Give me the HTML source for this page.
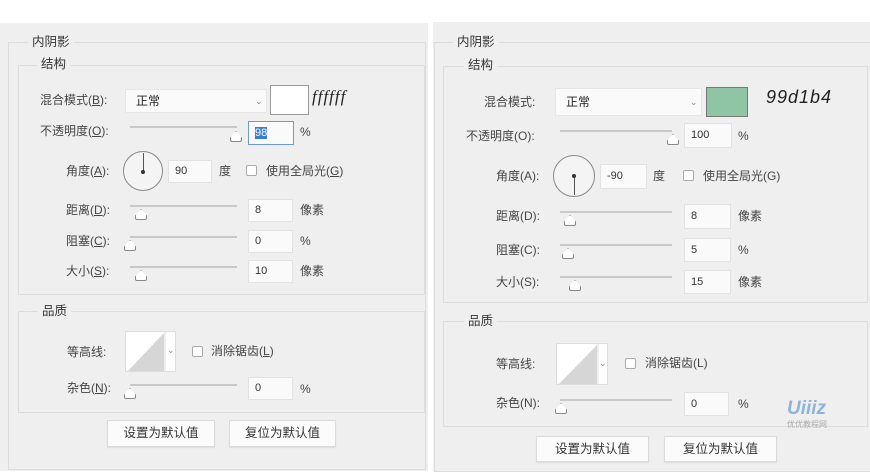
<!DOCTYPE html>
<html><head><meta charset="utf-8"><style>
*{margin:0;padding:0;box-sizing:border-box}
body{width:870px;height:471px;background:#fff;position:relative;overflow:hidden;font-family:"Liberation Sans","Noto Sans CJK SC",sans-serif;font-size:12px;color:#444}
.a{position:absolute}
.panel{position:absolute;background:#efefef}
.box{position:absolute;border:1px solid #dcdcdc}
.lbl{position:absolute;background:#efefef;padding:0 4px;color:#333;font-size:12.5px;line-height:14px}
.t{position:absolute;line-height:14px;white-space:nowrap;color:#444}
.in{position:absolute;background:#fafafa;border:1px solid #e2e2e2;font-size:11px;padding-left:6px;color:#333}
.sl{position:absolute;height:2px;background:#c8c8c8}
.th{position:absolute;width:0;height:0}
.th:before{content:"";position:absolute;left:-5px;top:0;width:10px;height:9px;background:#fff;border:1px solid #888;border-radius:5px 5px 2px 2px;clip-path:polygon(50% 0,100% 60%,100% 100%,0 100%,0 60%)}
.dd{position:absolute;background:#fafafa;border:1px solid #e6e6e6;font-size:12px;padding-left:10px;color:#222}
.chev{position:absolute;font-size:9px;color:#888}
.cb{position:absolute;width:11px;height:11px;border:1px solid #aaa;background:#fff;border-radius:2px}
.btn{position:absolute;background:#fbfbfb;border:1px solid #dadada;font-size:12.5px;text-align:center;color:#333;box-shadow:0 1px 1px #ddd}
.circ{position:absolute;border:1px solid #888;border-radius:50%;background:#f4f4f4}
.ct{position:absolute;background:#fff;border:1px solid #ddd}
</style></head><body>

<!-- LEFT -->
<div class="panel" style="left:0;top:23px;width:428px;height:448px"></div>
<div class="box" style="left:8px;top:42px;width:418px;height:428px"></div>
<div class="lbl" style="left:28px;top:35px">内阴影</div>
<div class="box" style="left:18px;top:65px;width:407px;height:230px"></div>
<div class="lbl" style="left:37px;top:57px">结构</div>
<div class="t" style="left:40px;top:93px">混合模式(<u>B</u>):</div>
<div class="dd" style="left:125px;top:89px;width:142px;height:24px;line-height:22px">正常</div>
<div class="chev" style="left:255px;top:96px">⌄</div>
<div class="a" style="left:270px;top:85px;width:39px;height:30px;background:#fff;border:1px solid #999"></div>
<div class="t" style="left:312px;top:90px;font-style:italic;font-size:17px;color:#222;font-family:'Liberation Serif',serif;letter-spacing:1px">ffffff</div>
<div class="t" style="left:40px;top:124px">不透明度(<u>O</u>):</div>
<div class="sl" style="left:130px;top:126px;width:107px"></div>
<div class="th" style="left:235px;top:131px"></div>
<div class="in" style="left:248px;top:121px;width:46px;height:24px;border:1px solid #6a9bd8;line-height:22px"><span style="background:#3a7bd5;color:#fff">98</span></div>
<div class="t" style="left:300px;top:125px">%</div>
<div class="t" style="left:66px;top:164px">角度(<u>A</u>):</div>
<div class="circ" style="left:123px;top:151px;width:40px;height:40px"></div>
<div class="a" style="left:143px;top:153px;width:1px;height:18px;background:#555"></div>
<div class="a" style="left:141px;top:170px;width:4px;height:4px;background:#333;border-radius:50%"></div>
<div class="in" style="left:168px;top:160px;width:44px;height:23px;line-height:21px">90</div>
<div class="t" style="left:219px;top:164px">度</div>
<div class="cb" style="left:246px;top:165px"></div>
<div class="t" style="left:266px;top:164px">使用全局光(<u>G</u>)</div>
<div class="t" style="left:66px;top:203px">距离(<u>D</u>):</div>
<div class="sl" style="left:130px;top:205px;width:107px"></div>
<div class="th" style="left:140px;top:209px"></div>
<div class="in" style="left:248px;top:199px;width:45px;height:23px;line-height:21px">8</div>
<div class="t" style="left:300px;top:203px">像素</div>
<div class="t" style="left:66px;top:234px">阻塞(<u>C</u>):</div>
<div class="sl" style="left:130px;top:236px;width:107px"></div>
<div class="th" style="left:129px;top:240px"></div>
<div class="in" style="left:248px;top:230px;width:45px;height:23px;line-height:21px">0</div>
<div class="t" style="left:300px;top:234px">%</div>
<div class="t" style="left:66px;top:264px">大小(<u>S</u>):</div>
<div class="sl" style="left:130px;top:266px;width:107px"></div>
<div class="th" style="left:140px;top:270px"></div>
<div class="in" style="left:248px;top:260px;width:45px;height:23px;line-height:21px">10</div>
<div class="t" style="left:300px;top:264px">像素</div>
<div class="box" style="left:18px;top:311px;width:407px;height:102px"></div>
<div class="lbl" style="left:38px;top:304px">品质</div>
<div class="t" style="left:67px;top:345px">等高线:</div>
<div class="ct" style="left:125px;top:331px;width:51px;height:41px;overflow:hidden">
<svg width="51" height="41" style="position:absolute;left:0;top:0"><polygon points="1,40 38,1 38,40" fill="#d6d6d6"/><line x1="39" y1="0" x2="39" y2="41" stroke="#ddd"/></svg>
<div class="chev" style="left:41px;top:13px">⌄</div></div>
<div class="cb" style="left:192px;top:346px"></div>
<div class="t" style="left:211px;top:344px">消除锯齿(<u>L</u>)</div>
<div class="t" style="left:67px;top:381px">杂色(<u>N</u>):</div>
<div class="sl" style="left:130px;top:384px;width:107px"></div>
<div class="th" style="left:129px;top:388px"></div>
<div class="in" style="left:248px;top:377px;width:45px;height:23px;line-height:21px">0</div>
<div class="t" style="left:300px;top:382px">%</div>
<div class="btn" style="left:107px;top:420px;width:108px;height:27px;line-height:25px">设置为默认值</div>
<div class="btn" style="left:229px;top:420px;width:107px;height:27px;line-height:25px">复位为默认值</div>

<!-- RIGHT -->
<div class="panel" style="left:433px;top:22px;width:437px;height:449px"></div>
<div class="box" style="left:434px;top:42px;width:440px;height:430px"></div>
<div class="lbl" style="left:453px;top:35px">内阴影</div>
<div class="box" style="left:443px;top:66px;width:425px;height:237px"></div>
<div class="lbl" style="left:464px;top:58px">结构</div>
<div class="t" style="left:484px;top:95px">混合模式:</div>
<div class="dd" style="left:555px;top:88px;width:147px;height:28px;line-height:26px">正常</div>
<div class="chev" style="left:690px;top:97px">⌄</div>
<div class="a" style="left:706px;top:87px;width:42px;height:30px;background:#8fc4a5;border:1px solid #777"></div>
<div class="t" style="left:766px;top:90px;font-style:italic;font-size:18px;color:#222;letter-spacing:1px">99d1b4</div>
<div class="t" style="left:466px;top:129px">不透明度(O):</div>
<div class="sl" style="left:560px;top:130px;width:112px"></div>
<div class="th" style="left:672px;top:134px"></div>
<div class="in" style="left:684px;top:123px;width:48px;height:25px;line-height:23px">100</div>
<div class="t" style="left:738px;top:129px">%</div>
<div class="t" style="left:496px;top:169px">角度(A):</div>
<div class="circ" style="left:553px;top:155px;width:42px;height:42px"></div>
<div class="a" style="left:574px;top:176px;width:1px;height:19px;background:#555"></div>
<div class="a" style="left:572px;top:174px;width:4px;height:4px;background:#333;border-radius:50%"></div>
<div class="in" style="left:600px;top:164px;width:47px;height:25px;line-height:23px">-90</div>
<div class="t" style="left:653px;top:169px">度</div>
<div class="cb" style="left:683px;top:170px"></div>
<div class="t" style="left:703px;top:169px">使用全局光(G)</div>
<div class="t" style="left:496px;top:209px">距离(D):</div>
<div class="sl" style="left:560px;top:211px;width:112px"></div>
<div class="th" style="left:569px;top:215px"></div>
<div class="in" style="left:684px;top:204px;width:47px;height:25px;line-height:23px">8</div>
<div class="t" style="left:738px;top:209px">像素</div>
<div class="t" style="left:496px;top:243px">阻塞(C):</div>
<div class="sl" style="left:560px;top:244px;width:112px"></div>
<div class="th" style="left:567px;top:248px"></div>
<div class="in" style="left:684px;top:238px;width:47px;height:24px;line-height:22px">5</div>
<div class="t" style="left:738px;top:243px">%</div>
<div class="t" style="left:496px;top:275px">大小(S):</div>
<div class="sl" style="left:560px;top:276px;width:112px"></div>
<div class="th" style="left:574px;top:280px"></div>
<div class="in" style="left:684px;top:270px;width:47px;height:24px;line-height:22px">15</div>
<div class="t" style="left:738px;top:275px">像素</div>
<div class="box" style="left:443px;top:321px;width:425px;height:106px"></div>
<div class="lbl" style="left:464px;top:314px">品质</div>
<div class="t" style="left:496px;top:357px">等高线:</div>
<div class="ct" style="left:556px;top:343px;width:52px;height:42px;overflow:hidden">
<svg width="52" height="42" style="position:absolute;left:0;top:0"><polygon points="1,41 40,1 40,41" fill="#d6d6d6"/><line x1="41" y1="0" x2="41" y2="42" stroke="#ddd"/></svg>
<div class="chev" style="left:42px;top:14px">⌄</div></div>
<div class="cb" style="left:625px;top:358px"></div>
<div class="t" style="left:645px;top:356px">消除锯齿(L)</div>
<div class="t" style="left:496px;top:396px">杂色(N):</div>
<div class="sl" style="left:560px;top:399px;width:112px"></div>
<div class="th" style="left:560px;top:403px"></div>
<div class="in" style="left:684px;top:392px;width:45px;height:24px;line-height:22px">0</div>
<div class="t" style="left:738px;top:397px">%</div>
<div class="a" style="left:787px;top:399px;font-size:19px;font-weight:bold;font-style:italic;color:#8fb4dc;line-height:20px">Uiiiz</div>
<div class="a" style="left:787px;top:419px;font-size:8px;color:#aaa">优优教程网</div>
<div class="btn" style="left:536px;top:436px;width:113px;height:26px;line-height:24px">设置为默认值</div>
<div class="btn" style="left:664px;top:436px;width:113px;height:26px;line-height:24px">复位为默认值</div>
</body></html>
